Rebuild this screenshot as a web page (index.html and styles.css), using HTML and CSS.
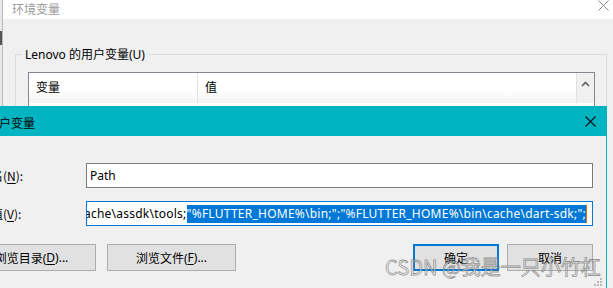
FILE: index.html
```html
<!DOCTYPE html>
<html>
<head>
<meta charset="utf-8">
<link rel="stylesheet" href="styles.css">
</head>
<body>
<div class="page">
  <div class="strip"><span class="strip-mark"></span></div>
  <div class="envwin">
    <div class="env-title">
      <span class="env-title-text">环境变量</span>
      <svg class="env-close" width="11" height="11" viewBox="0 0 11 11"><path d="M0.5 0.5L10.5 10.5M10.5 0.5L0.5 10.5" stroke="#8a8a8a" stroke-width="1" fill="none"/></svg>
    </div>
    <div class="env-body">
      <div class="group">
        <span class="legend">Lenovo 的用户变量(U)</span>
        <div class="listbox">
          <div class="list-header">
            <div class="col col-name">变量</div>
            <div class="col col-value">值</div>
            <div class="scrollbar">
              <svg width="9" height="6" viewBox="0 0 9 6"><path d="M1 5L4.5 1.5L8 5" stroke="#606060" stroke-width="1.6" fill="none"/></svg>
            </div>
          </div>
        </div>
      </div>
    </div>
  </div>

  <div class="dialog">
    <div class="dlg-title">
      <span class="dlg-title-text">编辑用户变量</span>
      <svg class="dlg-close" width="11" height="11" viewBox="0 0 11 11"><path d="M0.5 0.5L10.5 10.5M10.5 0.5L0.5 10.5" stroke="#111" stroke-width="1.1" fill="none"/></svg>
    </div>
    <div class="dlg-body">
      <div class="form">
        <label class="lbl">变量名(<u>N</u>):</label>
        <div class="input"><span class="input-text">Path</span></div>
        <label class="lbl">变量值(<u>V</u>):</label>
        <div class="input input-focus">
          <div class="value-line">
            <span class="plain">cache\assdk\tools;</span><span class="sel">"%FLUTTER_HOME%\bin;";"%FLUTTER_HOME%\bin\cache\dart-sdk;";</span><span class="caret"></span>
          </div>
        </div>
      </div>
      <div class="btn-row">
        <div class="btn-group">
          <div class="btn btn-wide">浏览目录(<u>D</u>)...</div>
          <div class="btn btn-wide">浏览文件(<u>F</u>)...</div>
        </div>
        <div class="btn-group btn-group-right">
          <div class="btn btn-default">确定</div>
          <div class="btn">取消</div>
        </div>
      </div>
    </div>
    <svg class="grip" width="8" height="8" viewBox="0 0 8 8">
      <rect x="6" y="0" width="2" height="2" fill="#b8b8b8"/>
      <rect x="3" y="3" width="2" height="2" fill="#b8b8b8"/>
      <rect x="6" y="3" width="2" height="2" fill="#b8b8b8"/>
      <rect x="0" y="6" width="2" height="2" fill="#b8b8b8"/>
      <rect x="3" y="6" width="2" height="2" fill="#b8b8b8"/>
      <rect x="6" y="6" width="2" height="2" fill="#b8b8b8"/>
    </svg>
  </div>

  <div class="watermark">CSDN @我是一只小竹杠</div>
</div>
</body>
</html>
```

FILE: styles.css
```css
* { box-sizing: border-box; }
html, body { margin: 0; padding: 0; }
body {
  font-family: "Noto Sans", "Noto Sans CJK SC", sans-serif;
  font-size: 12px;
  color: #000;
  background: #f0f0f0;
}
.page {
  position: relative;
  width: 613px;
  height: 288px;
  overflow: hidden;
  display: flex;
}
.strip {
  width: 3px;
  background: #e9e9e9;
  border-right: 1px solid #b9b9b9;
  position: relative;
}
.strip-mark {
  position: absolute;
  left: 0;
  top: 31px;
  width: 2px;
  height: 14px;
  background: #555;
}
.envwin {
  flex: 1;
  display: flex;
  flex-direction: column;
}
.env-title {
  height: 24px;
  background: #fff;
  display: flex;
  align-items: center;
  justify-content: space-between;
  padding: 0 4px 2px 9px;
}
.env-title-text {
  color: #9a9a9a;
  font-family: "Noto Sans CJK SC", sans-serif;
  font-size: 12px;
}
.env-close { margin-top: -6px; }
.env-body {
  flex: 1;
  background: #f0f0f0;
  padding: 35px 6px 0 12px;
}
.group {
  position: relative;
  border: 1px solid #dcdcdc;
  border-bottom: none;
  height: 240px;
  padding: 17px 11px 0 12px;
}
.legend {
  position: absolute;
  top: -9px;
  left: 6px;
  padding: 0 3px;
  background: #f0f0f0;
  line-height: 17px;
  font-family: "Noto Sans", "Noto Sans CJK SC", sans-serif;
}
.listbox {
  border: 1px solid #828790;
  background: #fff;
  height: 200px;
}
.list-header {
  display: flex;
  height: 30px;
  background: linear-gradient(#fff 0, #fff 60%, #f2f2f2 100%);
}
.col {
  padding: 5px 0 0 7px;
  font-family: "Noto Sans CJK SC", sans-serif;
}
.col-name {
  width: 169px;
  border-right: 1px solid #e3e3e3;
}
.col-value { flex: 1; }
.scrollbar {
  width: 18px;
  background: #f0f0f0;
  border-left: 1px solid #e0e0e0;
  display: flex;
  justify-content: center;
  padding-top: 8px;
}
.scrollbar svg { display: block; }

/* foreground dialog */
.dialog {
  position: absolute;
  left: -45px;
  top: 106px;
  width: 652px;
  height: 200px;
  background: #f0f0f0;
  border-right: 1px solid #00b5c1;
}
.dlg-title {
  height: 30px;
  background: #00b5c1;
  display: flex;
  align-items: center;
  justify-content: space-between;
  padding: 0 10px 0 8px;
}
.dlg-title-text {
  font-family: "Noto Sans CJK SC", sans-serif;
  font-size: 12px;
  padding-top: 2px;
}
.dlg-body {
  padding: 27px 13px 0 12px;
}
.form {
  display: grid;
  grid-template-columns: 119px 1fr;
  row-gap: 13px;
  align-items: center;
}
.lbl {
  font-family: "Noto Sans CJK SC", sans-serif;
  font-size: 12px;
}
.lbl u, .btn u { text-decoration-thickness: 1px; text-underline-offset: 2px; }
.input {
  height: 25px;
  background: #fff;
  border: 1px solid #7a7a7a;
  display: flex;
  align-items: center;
  padding: 0 3px;
  overflow: hidden;
  font-family: "Noto Sans", sans-serif;
  font-size: 12px;
}
.input-focus {
  border-color: #0078d7;
  justify-content: flex-end;
  padding: 0 5px 0 0;
}
.value-line {
  display: flex;
  align-items: center;
  white-space: nowrap;
  flex-shrink: 0;
  letter-spacing: 0.24px;
}
.sel {
  background: #0078d7;
  color: #fff;
  line-height: 18px;
}
.caret {
  width: 1px;
  height: 18px;
  background: #e07000;
}

.btn-row {
  display: flex;
  justify-content: space-between;
  margin-top: 18px;
}
.btn-group { display: flex; gap: 11px; }
.btn-group-right { gap: 8px; }
.btn {
  width: 86px;
  height: 27px;
  background: #e1e1e1;
  border: 1px solid #adadad;
  display: flex;
  align-items: center;
  justify-content: center;
  font-family: "Noto Sans", "Noto Sans CJK SC", sans-serif;
  font-size: 12px;
}
.btn-wide { width: 129px; }
.btn-default { border: 2px solid #0078d7; }
.grip {
  position: absolute;
  right: 4px;
  top: 172px;
}

.watermark {
  position: absolute;
  left: 385px;
  top: 253px;
  font-family: "Noto Sans CJK SC", sans-serif;
  font-size: 20px;
  line-height: 28px;
  white-space: nowrap;
  color: rgba(245, 245, 245, 0.55);
  -webkit-text-stroke: 0.8px rgba(90, 90, 90, 0.6);
}
```
